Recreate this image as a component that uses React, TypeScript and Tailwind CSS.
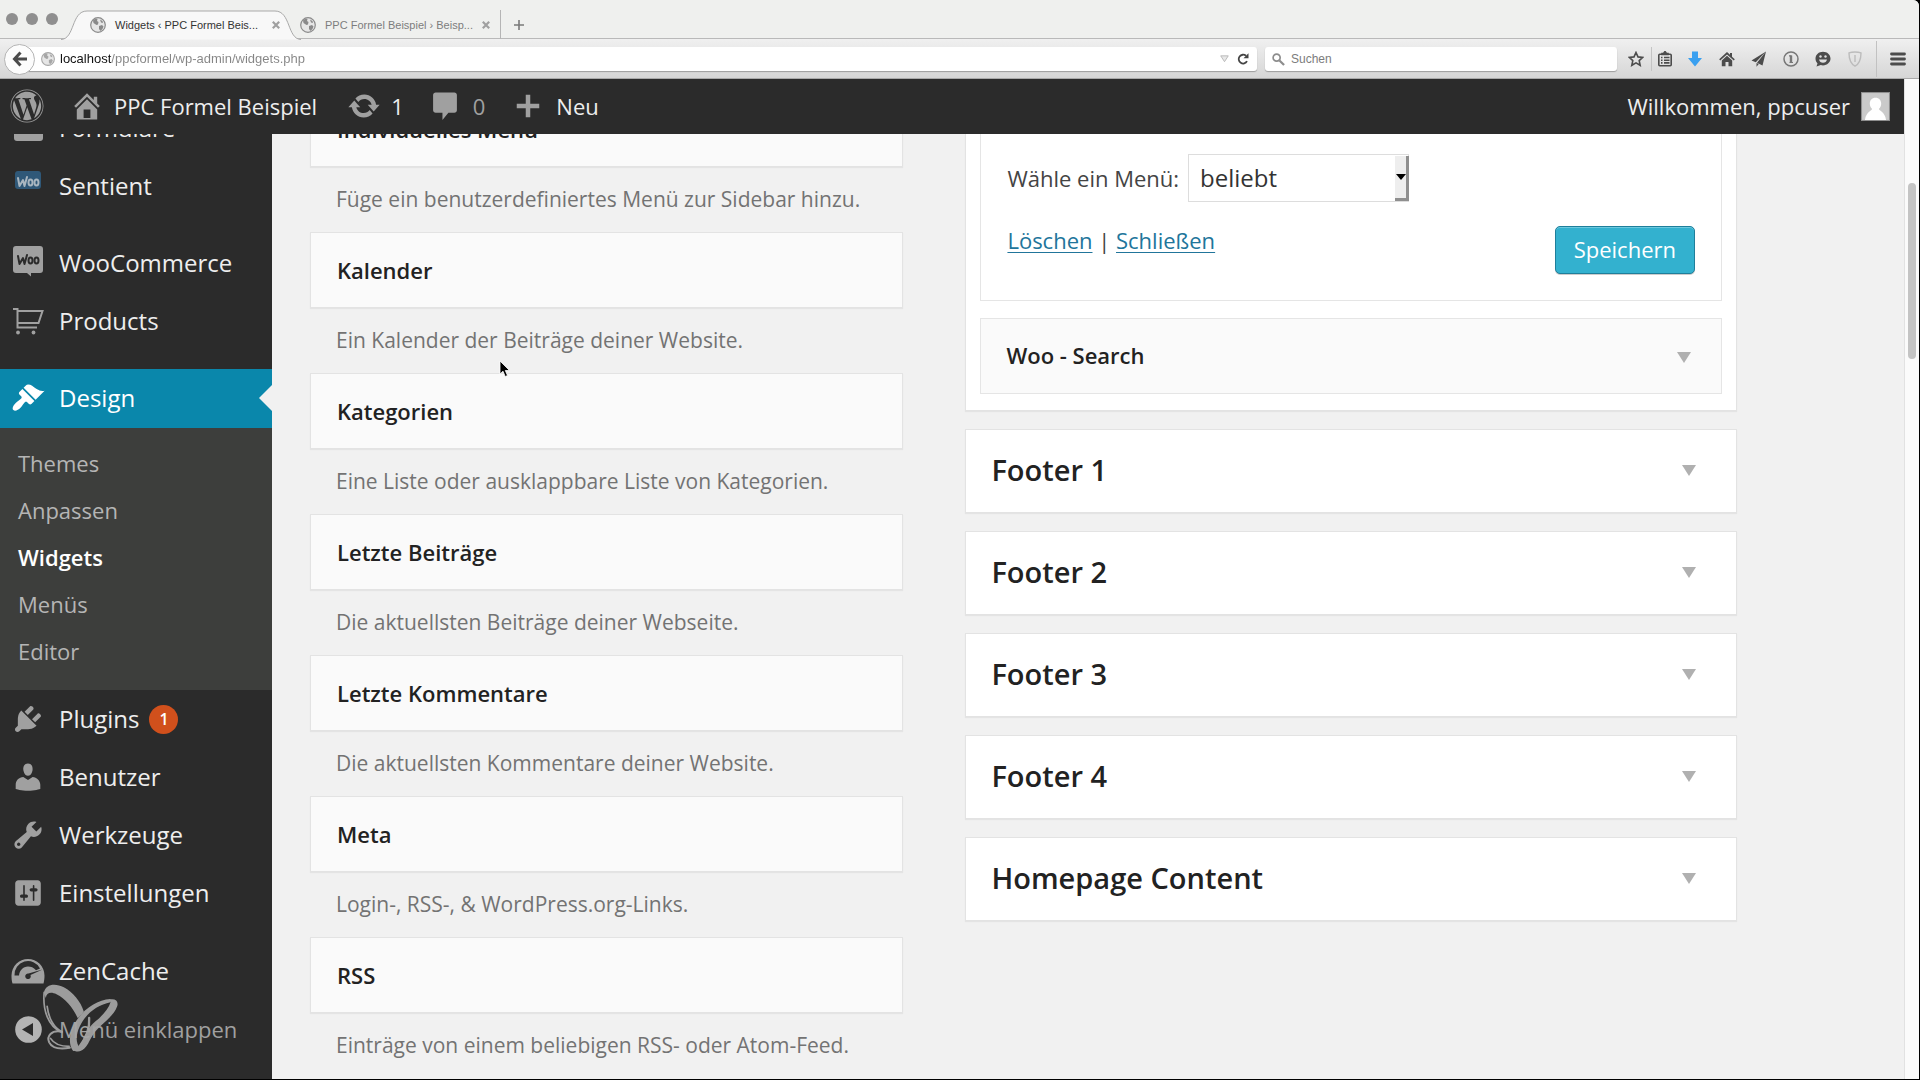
import React from 'react';
import { FaWordpress } from 'react-icons/fa';

const OPEN = "font-['Open_Sans','Noto_Sans',sans-serif]";
const HELV = "font-['Liberation_Sans',Arial,sans-serif]";

const ICONS = {
  home: 'M16 8.5l1.53 1.53-1.06 1.06L10 4.6l-6.47 6.49-1.06-1.06L10 2.5l4 4v-2h2v4zm-6-2.46l6 5.99V18H4v-5.97zM12 17v-5H8v5h4z',
  update:
    'M10.2 3.28c3.53 0 6.43 2.61 6.92 6h2.08l-3.5 4-3.5-4h2.32c-.45-1.97-2.21-3.45-4.32-3.45-1.45 0-2.73.71-3.54 1.78L4.95 5.66C6.23 4.2 8.11 3.28 10.2 3.28zm-.4 13.44c-3.52 0-6.43-2.61-6.92-6H.8l3.5-4c1.17 1.33 2.33 2.67 3.5 4H5.48c.45 1.97 2.21 3.45 4.32 3.45 1.45 0 2.73-.71 3.54-1.78l1.71 1.95c-1.28 1.46-3.15 2.38-5.25 2.38z',
  comment: 'M4.5 2h11c.8 0 1.5.7 1.5 1.5v9c0 .8-.7 1.5-1.5 1.5H12l-3.5 4.2V14h-4C3.700 14 3 13.300 3 12.500v-9C3 2.700 3.700 2 4.500 2z',
  plus: 'M17.500 8.500v3h-6v6h-3v-6h-6v-3h6v-6h3v6z',
  appearance:
    'M14.480 11.060L7.410 3.990l1.500-1.500c.5-.56 2.300-.47 3.510.32 1.210.8 1.430 1.280 2.910 2.100 1.180.64 2.450 1.260 4.450.85zm-.71.71L6.700 4.700 4.930 6.470c-.39.39-.39 1.020 0 1.410l1.060 1.060c.39.39.39 1.030 0 1.420-.6.6-1.430 1.110-2.210 1.690-.35.26-.7.53-1.010.84C1.430 14.230.4 16.080 1.400 17.070c.99 1 2.840-.03 4.180-1.360.31-.31.58-.66.85-1.020.57-.78 1.080-1.610 1.690-2.210.39-.39 1.020-.39 1.410 0l1.060 1.060c.39.39 1.020.39 1.410 0z',
  plugins:
    'M13.110 4.360L9.870 7.600 8 5.730l3.240-3.240c.35-.34 1.050-.2 1.560.32.52.51.66 1.210.31 1.550zm-8 1.770l.91-1.120 9.010 9.010-1.190.84c-.71.71-2.630 1.160-3.820 1.160H6.140L4.900 17.260c-.59.59-1.540.59-2.120 0-.59-.58-.59-1.530 0-2.120l1.240-1.240v-3.880c0-1.130.4-3.190 1.090-3.890zm7.260 3.970l3.240-3.240c.34-.35 1.040-.21 1.550.31.52.51.66 1.210.31 1.550l-3.240 3.250z',
  users:
    'M10 9.250c-2.270 0-2.730-3.440-2.730-3.440C7 4.020 7.820 2 9.970 2c2.160 0 2.980 2.020 2.710 3.810 0 0-.41 3.440-2.680 3.440zm0 2.570L12.720 10c2.390 0 4.520 2.330 4.520 4.530v2.490s-3.650 1.130-7.240 1.130c-3.650 0-7.240-1.130-7.240-1.130v-2.490c0-2.250 1.940-4.480 4.470-4.480z',
  tools:
    'M16.680 9.770c-1.340 1.340-3.300 1.670-4.950.99l-5.410 6.520c-.99.99-2.590.99-3.580 0s-.99-2.590 0-3.570l6.520-5.420c-.68-1.650-.35-3.610.99-4.950 1.280-1.280 3.120-1.620 4.720-1.060l-2.890 2.890 2.820 2.820 2.860-2.870c.53 1.580.18 3.390-1.080 4.650zM3.810 16.210c.4.39 1.040.39 1.430 0 .4-.4.4-1.040 0-1.430-.39-.4-1.030-.4-1.430 0-.39.39-.39 1.030 0 1.430z',
  settings:
    'M18 16V4c0-1.100-.9-2-2-2H4c-1.100 0-2 .9-2 2v12c0 1.100.9 2 2 2h12c1.100 0 2-.9 2-2zM8 11h1c.55 0 1 .45 1 1s-.45 1-1 1H8v1.500c0 .28-.22.5-.5.5s-.5-.22-.5-.5V13H6c-.55 0-1-.45-1-1s.45-1 1-1h1V5.500c0-.28.22-.5.5-.5s.5.22.5.5V11zm5-2h-1c-.55 0-1-.45-1-1s.45-1 1-1h1V5.500c0-.28.22-.5.5-.5s.5.22.5.5V7h1c.55 0 1 .45 1 1s-.45 1-1 1h-1v5.500c0 .28-.22.5-.5.5s-.5-.22-.5-.5V9z',
};

function Dash({ name, className = '' }: { name: keyof typeof ICONS; className?: string }) {
  return (
    <svg viewBox="0 0 20 20" fill="currentColor" aria-hidden="true" className={`shrink-0 ${className}`}>
      <path fillRule="evenodd" d={ICONS[name]} />
    </svg>
  );
}

function Globe({ className }: { className: string }) {
  return (
    <svg viewBox="0 0 16 16" aria-hidden="true" className={`shrink-0 ${className}`}>
      <circle cx="8" cy="8" r="7.300" fill="#e6e6e6" stroke="currentColor" strokeWidth="1.200" />
      <path d="M3 3.500c1-1.200 3-2 4.500-1.500L7 4l1.500 1L8 7.500 6.500 8 5 7 3.500 6zM9 9l3-1 1.500 1.500-1 2.500L10.500 14 9 12zM10 2.500l2.500 1.500.5 2-2-.5z" fill="currentColor" />
    </svg>
  );
}

function Tab({ title, active = false }: { title: string; active?: boolean }) {
  return (
    <div
      className={`relative flex h-[29px] items-center pl-[13px] ${
        active ? 'w-[210px] text-[#333]' : 'w-[214px] border-r border-[#b5b5b5] text-[#7d7d7d]'
      }`}
    >
      {active && (
        <svg viewBox="0 0 240 30" preserveAspectRatio="none" aria-hidden="true" className="absolute -left-[16px] top-0 h-[30px] w-[240px]">
          <path d="M0 29.500C14 29 10 1 26 1H214C230 1 226 29 240 29.500" fill="#f8f8f8" stroke="#a9a9a9" />
        </svg>
      )}
      <Globe className="relative size-4 text-[#8a8a8a]" />
      <span className="relative ml-[9px] w-[150px] whitespace-nowrap text-[11px] leading-4">{title}</span>
      <button type="button" aria-label="Tab schließen" className="relative ml-[7px] text-[#a0a0a0]">
        <svg viewBox="0 0 8 8" className="size-2" stroke="currentColor" strokeWidth="2.200">
          <path d="M.8.8l6.400 6.400M7.200.8L.8 7.200" />
        </svg>
      </button>
    </div>
  );
}

function ToolButton({ label, width, children }: { label: string; width: string; children: React.ReactNode }) {
  return (
    <button type="button" aria-label={label} className={`flex h-8 shrink-0 items-center justify-center text-[#4c4c4c] ${width}`}>
      {children}
    </button>
  );
}

function BrowserChrome() {
  return (
    <header className={`shrink-0 ${HELV}`}>
      <div className="flex h-[39px] items-end border-b border-[#b9b9b9] bg-[#eff0ee]">
        <div className="mb-[13px] ml-[6px] flex gap-2">
          <span className="size-3 rounded-full bg-[#8f8f8f]" />
          <span className="size-3 rounded-full bg-[#8f8f8f]" />
          <span className="size-3 rounded-full bg-[#8f8f8f]" />
        </div>
        <div className="-mb-px ml-[19px] flex">
          <Tab title="Widgets ‹ PPC Formel Beis..." active />
          <Tab title="PPC Formel Beispiel › Beisp..." />
        </div>
        <button type="button" aria-label="Neuer Tab" className="mb-[8px] ml-[13px] text-[#7a7a7a]">
          <svg viewBox="0 0 10 10" className="size-[10px]" stroke="currentColor" strokeWidth="1.600">
            <path d="M5 0v10M0 5h10" />
          </svg>
        </button>
      </div>
      <div className="flex h-10 items-center border-b border-[#a9a9a9] bg-linear-to-b from-[#f0f0f0] to-[#d6d6d6] pt-px">
        <button type="button" aria-label="Zurück" className="relative z-10 ml-[4px] flex size-[31px] shrink-0 items-center justify-center rounded-full border border-[#b4b4b4] bg-[#fcfcfc] text-[#4a4a4a]">
          <svg viewBox="0 0 16 16" className="size-4" fill="none" stroke="currentColor" strokeWidth="3">
            <path d="M8.500 1.500L2.500 8l6 6.500M3 8h12" />
          </svg>
        </button>
        <div className="-ml-[14px] flex h-6 flex-1 items-center rounded-r-[3px] bg-white pl-[20px] shadow-[0_1px_1px_#9d9d9d]">
          <Globe className="size-[14px] text-[#a6a6a6]" />
          <input
            type="text"
            aria-label="Adresse"
            defaultValue="localhost/ppcformel/wp-admin/widgets.php"
            className="ml-[5px] min-w-0 flex-1 bg-[linear-gradient(90deg,#111_51px,#858585_51px)] bg-clip-text text-[13px] leading-4 text-transparent outline-none"
          />
          <svg viewBox="0 0 10 8" className="h-[8px] w-[9px]" fill="#e8e8e8" stroke="#b5b5b5" aria-hidden="true">
            <path d="M.8.5h8.400L5 7z" />
          </svg>
          <button type="button" aria-label="Neu laden" className="ml-[8px] mr-[8px] text-[#444]">
            <svg viewBox="0 0 12 12" className="size-3" fill="none" stroke="currentColor" strokeWidth="1.800">
              <path d="M10 8.200A4.400 4.400 0 1 1 9 2.800" />
              <path d="M11.500.3v5H6.500z" fill="currentColor" stroke="none" />
            </svg>
          </button>
        </div>
        <label className="ml-[8px] flex h-6 w-[352px] items-center rounded-[3px] bg-white pl-[7px] shadow-[0_1px_1px_#9d9d9d]">
          <svg viewBox="0 0 14 14" className="size-[13px]" fill="none" stroke="#8d8d8d" strokeWidth="1.800" aria-hidden="true">
            <circle cx="5" cy="5" r="3.800" />
            <path d="M8 8l5 5" strokeWidth="2.400" />
          </svg>
          <input type="text" aria-label="Suchen" placeholder="Suchen" className="ml-[6px] w-40 text-[12px] leading-4 outline-none placeholder:text-[#7c7c7c]" />
        </label>
        <ToolButton label="Lesezeichen" width="ml-[4px] w-[30px]">
          <svg viewBox="0 0 16 16" className="size-4" fill="none" stroke="currentColor" strokeWidth="1.600">
            <path d="M8 1.500l2 4.400 4.700.5-3.500 3.200 1 4.700L8 11.900l-4.200 2.400 1-4.700L1.300 6.400 6 5.900z" />
          </svg>
        </ToolButton>
        <span className="h-6 w-px bg-[#c4c4c4]" />
        <ToolButton label="Lesezeichenliste" width="w-[26px]">
          <svg viewBox="0 0 16 16" className="size-4" fill="none" stroke="currentColor" strokeWidth="1.600">
            <rect x="1.800" y="3.200" width="12.400" height="11.500" rx="1" />
            <path d="M4 6.500h1.500M7 6.500h5.500M4 9.200h1.500M7 9.200h5.500M4 11.900h1.500M7 11.900h5.500" />
            <path d="M5 3.500V2.500h1.500L8 .5l1.500 2H11v1z" fill="currentColor" />
          </svg>
        </ToolButton>
        <ToolButton label="Downloads" width="w-[33px]">
          <svg viewBox="0 0 14 16" className="h-4 w-[14px]" fill="#3aa0f0">
            <path d="M4 .5h6V7h4l-7 8.500L0 7h4z" />
          </svg>
        </ToolButton>
        <ToolButton label="Startseite" width="w-[32px]">
          <svg viewBox="0 0 16 16" className="size-4" fill="currentColor">
            <path d="M8 1l3 2.800V2h2v3.700l2.800 2.600-1 1.200L8 3.400 1.200 9.500l-1-1.200z" />
            <path d="M8 4.800l5.200 4.700v5.700H9.500V11h-3v4.200H2.800V9.500z" />
          </svg>
        </ToolButton>
        <ToolButton label="Senden" width="w-[32px]">
          <svg viewBox="0 0 16 16" className="size-4" fill="currentColor">
            <path d="M15 .5L.5 9.500l4.300 1.800zM15 .5L6 11.800l5.500 2.700zM5.500 12v3.800l2.300-2.700z" />
          </svg>
        </ToolButton>
        <ToolButton label="1Password" width="w-[32px]">
          <svg viewBox="0 0 16 16" className="size-4" fill="none" stroke="#777" strokeWidth="1.500">
            <circle cx="8" cy="8" r="7" />
            <path d="M8 4.500v7" strokeWidth="2.400" />
            <path d="M6 4.800h2.500M6.500 11.500h3.500" strokeWidth="1.200" />
          </svg>
        </ToolButton>
        <ToolButton label="Chat" width="w-[32px]">
          <svg viewBox="0 0 16 16" className="size-4" fill="currentColor">
            <path d="M8 .8c4.200 0 7.500 2.900 7.500 6.800S12.200 14.400 8 14.400c-.8 0-1.500-.1-2.200-.3L1.500 15.600l1-3.200C1.200 11.200.5 9.500.5 7.600.5 3.700 3.800.8 8 .8z" />
            <path d="M4 8.500h8c-.3 2-2 3.300-4 3.300S4.300 10.500 4 8.500z" fill="#e0e0e0" />
            <circle cx="5.500" cy="5.500" r="1.200" fill="#e0e0e0" />
            <circle cx="10.500" cy="5.500" r="1.200" fill="#e0e0e0" />
          </svg>
        </ToolButton>
        <ToolButton label="Schutz" width="w-[32px]">
          <svg viewBox="0 0 16 16" className="size-4" fill="none" stroke="#bcbcbc" strokeWidth="1.400">
            <path d="M8 1c2.300 0 4.300.3 6 .9 0 6.300-1.700 10.700-6 13.300C3.700 12.600 2 8.200 2 1.900 3.700 1.300 5.700 1 8 1z" />
            <path d="M8 4v7" />
          </svg>
        </ToolButton>
        <span className="ml-[5px] h-9 w-px bg-[#c2c2c2]" />
        <ToolButton label="Menü" width="w-[42px]">
          <svg viewBox="0 0 16 14" className="h-[14px] w-4" stroke="currentColor" strokeWidth="2.800" strokeLinecap="round">
            <path d="M1.500 2h13M1.500 7h13M1.500 12h13" />
          </svg>
        </ToolButton>
      </div>
    </header>
  );
}

function AdminBar() {
  return (
    <nav aria-label="Werkzeugleiste" className="flex h-[55px] shrink-0 items-center bg-[#2b2b2b] pb-px text-[22px] leading-8 text-[#eee]">
      <a href="#wp" aria-label="WordPress" className="ml-[10px] text-[#a0a0a0]">
        <FaWordpress className="size-[34px]" />
      </a>
      <a href="#site" className="ml-[26px] flex items-center">
        <Dash name="home" className="size-[34px] text-[#a0a0a0]" />
        <span className="ml-[10px]">PPC Formel Beispiel</span>
      </a>
      <a href="#updates" className="ml-[30px] flex items-center">
        <Dash name="update" className="size-[34px] text-[#a0a0a0]" />
        <span className="ml-[10px]">1</span>
      </a>
      <a href="#comments" className="ml-[24px] flex items-center">
        <Dash name="comment" className="size-[34px] text-[#a0a0a0]" />
        <span className="ml-[11px] text-[#a0a0a0]">0</span>
      </a>
      <a href="#new" className="ml-[28px] flex items-center">
        <Dash name="plus" className="size-[30px] text-[#a0a0a0]" />
        <span className="ml-[13px]">Neu</span>
      </a>
      <a href="#profile" className="ml-auto mr-[14px] flex items-center">
        <span>Willkommen, ppcuser</span>
        <svg viewBox="0 0 28 28" className="ml-[11px] size-[29px]" aria-hidden="true">
          <rect x=".5" y=".5" width="27" height="27" fill="#cacaca" stroke="#8e8e8e" />
          <path d="M14 5.500c3.500 0 5.500 2.500 5.500 5.800 0 2-1 4-2.300 5.200.3 1.500 5.800 2.500 7 10.500H3.800c1.200-8 6.700-9 7-10.500C9.500 15.300 8.500 13.300 8.500 11.300c0-3.300 2-5.800 5.500-5.800z" fill="#fff" />
        </svg>
      </a>
    </nav>
  );
}

function MenuItem({ icon, children, active = false }: { icon: React.ReactNode; children: React.ReactNode; active?: boolean }) {
  return (
    <a
      href="#menu"
      className={`relative flex items-center ${active ? 'h-[59px] bg-[#0a87ab] pb-[2px] text-white' : 'h-[58px] text-[#eee]'}`}
    >
      <span className={`flex w-[59px] justify-center pr-[3px] ${active ? 'text-white' : 'text-[#a0a0a0]'}`}>{icon}</span>
      {children}
      {active && <span className="absolute right-0 top-[16px] border-y-[13px] border-r-[13px] border-y-transparent border-r-[#f1f1f1]" />}
    </a>
  );
}

function WooIcon({ blue = false }: { blue?: boolean }) {
  return (
    <svg viewBox="0 0 32 32" className={`size-8 ${blue ? '-mt-[6px]' : '-mt-[4px]'}`} aria-hidden="true">
      {blue ? (
        <rect x="3" y="4" width="26" height="18" rx="3" fill="#2f5878" />
      ) : (
        <path d="M4 1h24a3 3 0 0 1 3 3v21a3 3 0 0 1-3 3h-9v3.500L15 28H4a3 3 0 0 1-3-3V4a3 3 0 0 1 3-3z" fill="#a0a0a0" />
      )}
      <g fill="none" stroke={blue ? '#a9b6c0' : '#2b2b2b'} strokeWidth="2" strokeLinecap="round" strokeLinejoin="round">
        <path d="M6 11l1.500 8 3.500-6 1.500 6L15 10" />
        <ellipse cx="18.500" cy="15.500" rx="2" ry="3" />
        <ellipse cx="24.500" cy="15.500" rx="2" ry="3" />
      </g>
    </svg>
  );
}

function CartIcon() {
  return (
    <svg viewBox="0 0 32 28" className="h-7 w-8" fill="none" stroke="currentColor" strokeWidth="2" aria-hidden="true">
      <path d="M1 2h4.500v18.500H25M6 4h24.500l-4 12H6" />
      <circle cx="6" cy="25.500" r="1.900" fill="currentColor" stroke="none" />
      <circle cx="21.500" cy="25.500" r="1.900" fill="currentColor" stroke="none" />
    </svg>
  );
}

function GaugeIcon() {
  return (
    <svg viewBox="0 0 34 26" className="h-[26px] w-[34px]" aria-hidden="true">
      <path d="M1.500 25.500C.7 23 .5 20 .5 17.500A16.500 16.500 0 0 1 33.500 17.500c0 2.500-.3 5.500-1 8z" fill="currentColor" />
      <path d="M3.500 17.500A13.500 13.500 0 0 1 29 10.500l-4 1.800C22.500 9.500 20 8.500 17 8.500c-5 0-8.500 4-9 9z" fill="#2b2b2b" />
      <path d="M31.500 11.500l-12 5.500a2.800 2.800 0 1 1-2-1.500z" fill="#2b2b2b" />
    </svg>
  );
}

function ButterflyMark() {
  return (
    <svg viewBox="125 880 230 210" className="absolute left-[42px] top-[-17px] h-[70px] w-[77px]" fill="none" stroke="#a6a6a6" strokeLinecap="round" opacity=".92" aria-hidden="true">
      <path d="M130 910C135 882 165 880 190 893 218 908 240 935 250 966L232 986C215 950 195 928 168 914 152 906 138 908 136 925z" fill="#a6a6a6" stroke="none" />
      <path d="M131 908C126 960 142 1010 184 1028" strokeWidth="5" />
      <path d="M140 950C144 985 160 1015 184 1026" strokeWidth="5" />
      <path d="M330 928C285 930 240 965 218 1010 206 1035 204 1068 218 1084L240 1078C224 1060 226 1035 238 1010 256 972 290 946 330 938z" fill="#a6a6a6" stroke="none" />
      <path d="M326 930C345 925 355 935 350 950 340 980 305 1000 285 1025 265 1050 262 1078 238 1085 228 1086 220 1084 216 1080L240 1070C252 1035 262 1015 285 995 310 975 325 955 330 938z" fill="#a6a6a6" stroke="none" />
      <path d="M266 985C268 1015 258 1045 236 1072" strokeWidth="7" />
      <path d="M184 1026C152 1020 138 1040 146 1058 156 1078 185 1078 208 1074" strokeWidth="6" />
      <path d="M150 1046C160 1062 182 1070 206 1070" strokeWidth="5" />
    </svg>
  );
}

const SUBMENU = ['Themes', 'Anpassen', 'Widgets', 'Menüs', 'Editor'];

function Sidebar() {
  const dash = 'size-[34px]';
  return (
    <aside className="w-[272px] shrink-0 overflow-hidden bg-[#2b2b2b]">
      <nav aria-label="Hauptmenü" className="-mt-[35px] text-[24px] leading-8">
        <MenuItem icon={<span className="h-[26px] w-[29px] rounded-[3px] bg-[#a0a0a0]" />}>Formulare</MenuItem>
        <MenuItem icon={<WooIcon blue />}>Sentient</MenuItem>
        <div className="h-[19px]" />
        <MenuItem icon={<WooIcon />}>WooCommerce</MenuItem>
        <MenuItem icon={<CartIcon />}>Products</MenuItem>
        <div className="h-[19px]" />
        <MenuItem active icon={<Dash name="appearance" className={dash} />}>Design</MenuItem>
        <ul className="bg-[#3d3e3c] pb-4 pt-[11px] text-[22px]">
          {SUBMENU.map((s) => (
            <li key={s}>
              <a href="#sub" className={`flex h-[47px] items-center pl-[18px] ${s === 'Widgets' ? 'font-semibold text-white' : 'text-[#b5b5b5]'}`}>
                {s}
              </a>
            </li>
          ))}
        </ul>
        <MenuItem icon={<Dash name="plugins" className={dash} />}>
          Plugins
          <span className="ml-[10px] flex size-[29px] items-center justify-center rounded-full bg-[#d1501c] text-[16px] font-semibold leading-5 text-white">1</span>
        </MenuItem>
        <MenuItem icon={<Dash name="users" className={dash} />}>Benutzer</MenuItem>
        <MenuItem icon={<Dash name="tools" className={dash} />}>Werkzeuge</MenuItem>
        <MenuItem icon={<Dash name="settings" className="size-8" />}>Einstellungen</MenuItem>
        <div className="h-5" />
        <MenuItem icon={<GaugeIcon />}>ZenCache</MenuItem>
        <button type="button" className="relative flex h-[58px] w-full items-center text-[22px] text-[#a0a0a0]">
          <span className="flex w-[59px] justify-center pr-[3px]">
            <svg viewBox="0 0 27 27" className="size-[27px]" aria-hidden="true">
              <circle cx="13.500" cy="13.500" r="13.300" fill="#b4b4b4" />
              <path d="M18 7v13L7 13.500z" fill="#2b2b2b" />
            </svg>
          </span>
          Menü einklappen
          <ButterflyMark />
        </button>
      </nav>
    </aside>
  );
}

const WIDGETS = [
  ['Individuelles Menü', 'Füge ein benutzerdefiniertes Menü zur Sidebar hinzu.'],
  ['Kalender', 'Ein Kalender der Beiträge deiner Website.'],
  ['Kategorien', 'Eine Liste oder ausklappbare Liste von Kategorien.'],
  ['Letzte Beiträge', 'Die aktuellsten Beiträge deiner Webseite.'],
  ['Letzte Kommentare', 'Die aktuellsten Kommentare deiner Website.'],
  ['Meta', 'Login-, RSS-, & WordPress.org-Links.'],
  ['RSS', 'Einträge von einem beliebigen RSS- oder Atom-Feed.'],
];

const AREAS = ['Footer 1', 'Footer 2', 'Footer 3', 'Footer 4', 'Homepage Content'];

function Caret() {
  return <span className="border-x-[7px] border-t-[11px] border-x-transparent border-t-[#b0b0b0]" />;
}

function AvailableWidgets() {
  return (
    <section aria-label="Verfügbare Widgets" className="-mt-[43px]">
      {WIDGETS.map(([title, text]) => (
        <article key={title}>
          <h3 className="flex h-[76px] items-center border border-[#e3e3e3] bg-[#fafafa] px-[26px] pb-px text-[22px] font-semibold leading-8 text-[#222] shadow-[0_1px_1px_rgba(0,0,0,0.05)]">
            {title}
          </h3>
          <p className="flex h-[65px] items-center whitespace-nowrap px-[26px] pb-px text-[21px] leading-8 text-[#737373]">{text}</p>
        </article>
      ))}
    </section>
  );
}

function WidgetAreas() {
  return (
    <section aria-label="Widget-Bereiche" className="flex flex-col gap-[18px] text-[#222]">
      <div className="border border-t-0 border-[#e3e3e3] bg-white px-[14px] pb-[16px] shadow-[0_1px_1px_rgba(0,0,0,0.05)]">
        <div className="border border-t-0 border-[#e5e5e5] px-[26px] pb-[26px] pt-[20px] text-[#444]">
          <div className="flex items-center text-[22px] leading-8">
            <label htmlFor="menu">Wähle ein Menü:</label>
            <div className="relative ml-[9px]">
              <select id="menu" className="h-12 w-[221px] appearance-none border border-[#ddd] bg-white pl-[11px] text-[24px] text-[#333]">
                <option>beliebt</option>
              </select>
              <span className="pointer-events-none absolute right-0 top-[2px] flex h-[45px] w-[14px] items-center justify-end border-b-[3px] border-r-[3px] border-[#8f8f8f] bg-[#eee]">
                <span className="border-x-[5px] border-t-[6px] border-x-transparent border-t-black" />
              </span>
            </div>
          </div>
          <div className="mt-6 flex items-start justify-between text-[22px] leading-7">
            <p>
              <a href="#delete" className="text-[#21759b] underline decoration-1 underline-offset-3">Löschen</a>
              {' | '}
              <a href="#close" className="text-[#21759b] underline decoration-1 underline-offset-3">Schließen</a>
            </p>
            <button type="button" className="h-12 rounded-[5px] border border-[#1f7f9b] bg-[#33b1cf] px-[18px] pb-[2px] text-[22px] leading-7 text-white shadow-[inset_0_1px_0_#6cc8de,0_1px_0_#ccc]">
              Speichern
            </button>
          </div>
        </div>
        <h4 className="mt-[17px] flex h-[76px] items-center justify-between border border-[#e5e5e5] bg-[#fafafa] pb-[2px] pl-[25px] pr-[30px] text-[22px] font-semibold leading-8">
          Woo - Search
          <span className="mt-[4px]">
            <span className="block border-x-[7px] border-t-[11px] border-x-transparent border-t-[#b0b0b0]" />
          </span>
        </h4>
      </div>
      {AREAS.map((a) => (
        <h3 key={a} className="flex h-[84px] items-center justify-between border border-[#e3e3e3] bg-white pb-[2px] pl-[25px] pr-[40px] text-[29px] font-semibold leading-9 shadow-[0_1px_1px_rgba(0,0,0,0.05)]">
          {a}
          <Caret />
        </h3>
      ))}
    </section>
  );
}

export default function App() {
  return (
    <div className="h-screen overflow-hidden bg-black pb-px pr-px">
      <div className="flex h-full flex-col overflow-hidden rounded-tr-[6px] bg-[#f1f1f1]">
        <BrowserChrome />
        <div className={`flex min-h-0 flex-1 ${OPEN}`}>
          <div className="flex min-w-0 flex-1 flex-col">
            <AdminBar />
            <div className="flex min-h-0 flex-1">
              <Sidebar />
              <main className="grid min-w-0 flex-1 grid-cols-[593fr_771fr] items-start gap-[62px] overflow-hidden pl-[38px] pr-[167px]">
                <AvailableWidgets />
                <WidgetAreas />
              </main>
            </div>
          </div>
          <div className="w-[15px] shrink-0 border-l border-[#e2e2e2] bg-[#fbfbfb]">
            <div className="ml-[3px] mt-[104px] h-[176px] w-2 rounded-full bg-[#c4c4c4]" />
          </div>
        </div>
      </div>
      <svg viewBox="0 0 12 18" className="absolute left-[499px] top-[360px] h-[18px] w-3" aria-hidden="true">
        <path d="M1 1v13l3-2.800L6.200 16.500l2.300-1L6.300 10.500h4.200z" fill="#000" stroke="#fff" strokeWidth=".8" />
      </svg>
    </div>
  );
}
